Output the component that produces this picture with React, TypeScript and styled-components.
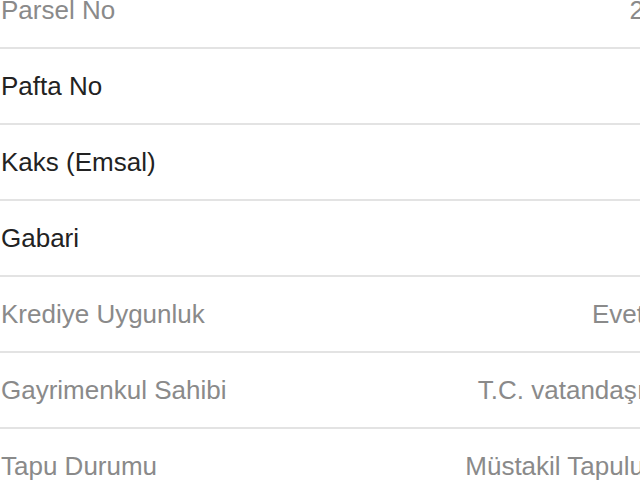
import React from "react";
import styled, { createGlobalStyle } from "styled-components";

const Global = createGlobalStyle`
  html, body {
    margin: 0;
    padding: 0;
    background: #ffffff;
    overflow: hidden;
  }
  body {
    font-family: "Liberation Sans", Arial, sans-serif;
  }
`;

const Viewport = styled.div`
  width: 640px;
  height: 480px;
  overflow: hidden;
  background: #ffffff;
`;

const List = styled.div`
  display: flex;
  flex-direction: column;
  width: 644px;
  margin-top: -27px;
`;

const Row = styled.div`
  display: flex;
  align-items: center;
  justify-content: space-between;
  height: 74px;
  border-bottom: 2px solid #e3e3e3;
  padding: 0 0 0 1px;
`;

const Label = styled.span<{ $muted?: boolean }>`
  font-size: 26px;
  color: ${(p) => (p.$muted ? "#8a8a8a" : "#222222")};
  white-space: nowrap;
`;

const Value = styled.span`
  font-size: 26px;
  color: #8a8a8a;
  white-space: nowrap;
`;

const rows: { label: string; value?: string; muted: boolean }[] = [
  { label: "Parsel No", value: "2", muted: true },
  { label: "Pafta No", muted: false },
  { label: "Kaks (Emsal)", muted: false },
  { label: "Gabari", muted: false },
  { label: "Krediye Uygunluk", value: "Evet", muted: true },
  { label: "Gayrimenkul Sahibi", value: "T.C. vatandaşı", muted: true },
  { label: "Tapu Durumu", value: "Müstakil Tapulu", muted: true },
];

export default function App() {
  return (
    <>
      <Global />
      <Viewport>
        <List>
          {rows.map((r) => (
            <Row key={r.label}>
              <Label $muted={r.muted}>{r.label}</Label>
              {r.value ? <Value>{r.value}</Value> : null}
            </Row>
          ))}
        </List>
      </Viewport>
    </>
  );
}
